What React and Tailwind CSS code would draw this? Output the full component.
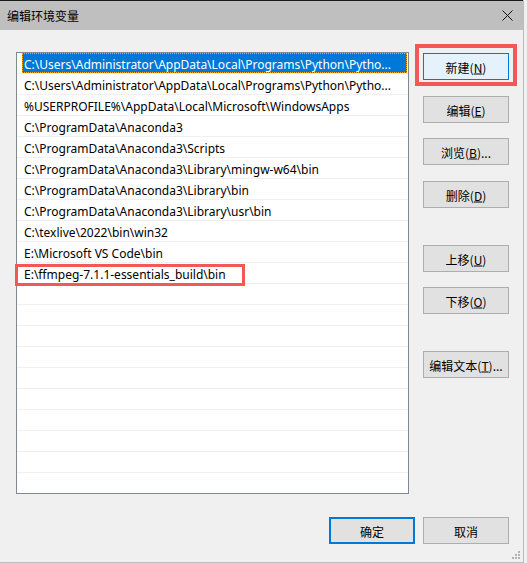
import React from 'react'

const paths = [
  'C:\\Users\\Administrator\\AppData\\Local\\Programs\\Python\\Pytho...',
  'C:\\Users\\Administrator\\AppData\\Local\\Programs\\Python\\Pytho...',
  '%USERPROFILE%\\AppData\\Local\\Microsoft\\WindowsApps',
  'C:\\ProgramData\\Anaconda3',
  'C:\\ProgramData\\Anaconda3\\Scripts',
  'C:\\ProgramData\\Anaconda3\\Library\\mingw-w64\\bin',
  'C:\\ProgramData\\Anaconda3\\Library\\bin',
  'C:\\ProgramData\\Anaconda3\\Library\\usr\\bin',
  'C:\\texlive\\2022\\bin\\win32',
  'E:\\Microsoft VS Code\\bin',
  'E:\\ffmpeg-7.1.1-essentials_build\\bin',
]

const cjk = { fontFamily: '"Noto Sans CJK SC", "Noto Sans", sans-serif' }

function Btn({ label, hot, tail = '', className = '', variant = 'plain' }) {
  const look =
    variant === 'hover'
      ? 'bg-[#e5f1fb] border border-[#0078d7]'
      : variant === 'default'
      ? 'bg-[#e1e1e1] border-2 border-[#0078d7]'
      : 'bg-[#e1e1e1] border border-[#adadad]'
  return (
    <div className={`w-[86px] h-[27px] flex items-center justify-center text-[12px] text-black ${look} ${className}`} style={cjk}>
      <span className="translate-y-[0.5px]">
        {label}
        {hot && (<>(<u>{hot}</u>)</>)}
        {tail}
      </span>
    </div>
  )
}

function Grip() {
  const dots = [[6, 0], [3, 3], [6, 3], [0, 6], [3, 6], [6, 6]]
  return (
    <div className="absolute right-[3px] bottom-[3px] w-[8px] h-[8px]">
      {dots.map(([x, y], i) => (
        <div key={i} className="absolute w-[2px] h-[2px] bg-[#b4b4b4]" style={{ left: x, top: y }} />
      ))}
    </div>
  )
}

export default function App() {
  const rows = Array.from({ length: 21 }, (_, i) => paths[i] || '')

  return (
    <div className="w-[527px] h-[563px] bg-[#f0f0f0] overflow-hidden">
      <div className="relative w-[524px] h-[563px] bg-[#f0f0f0] border-r border-b border-[#bcbcbc] flex flex-col">
        {/* title bar */}
        <div className="h-[30px] shrink-0 bg-[#bfbfbf] border-t border-[#1a1a1a] flex items-center pl-[7px] pr-[10px]">
          <span className="text-[12px] text-black" style={cjk}>编辑环境变量</span>
          <svg className="ml-auto mt-[-1px]" width="11" height="11" viewBox="0 0 11 11">
            <path d="M0.5 0.5 L10.5 10.5 M10.5 0.5 L0.5 10.5" stroke="#111" strokeWidth="1" />
          </svg>
        </div>

        {/* body */}
        <div className="flex pl-[16px] pt-[22px]">
          <div className="w-[393px] h-[442px] bg-white border border-[#828790] overflow-hidden">
            {rows.map((p, i) => (
              <div key={i} className="h-[21px] border-b border-[#f0f0f0] pl-[5px] pr-[1px]">
                <div
                  className={`h-[20px] flex items-center pt-[3px] pl-[2px] whitespace-nowrap text-[12px] ${i === 0 ? 'bg-[#0078d7] text-white outline-1 outline-dotted outline-[#f5a623] -outline-offset-1' : 'text-black'}`}
                  style={{ fontFamily: '"Noto Sans", "Open Sans", sans-serif' }}
                >
                  {p}
                </div>
              </div>
            ))}
          </div>

          <div className="ml-[14px] pt-[1px] flex flex-col">
            <Btn label="新建" hot="N" variant="hover" />
            <Btn label="编辑" hot="E" className="mt-[16px]" />
            <Btn label="浏览" hot="B" tail="..." className="mt-[15px]" />
            <Btn label="删除" hot="D" className="mt-[16px]" />
            <Btn label="上移" hot="U" className="mt-[37px]" />
            <Btn label="下移" hot="O" className="mt-[15px]" />
            <Btn label="编辑文本" hot="T" tail="..." className="mt-[37px]" />
          </div>
        </div>

        {/* footer */}
        <div className="flex justify-end gap-[8px] pr-[14px] mt-[23px]">
          <Btn label="确定" variant="default" />
          <Btn label="取消" />
        </div>

        <Grip />

        {/* annotation boxes */}
        <div className="absolute left-[15px] top-[264px] w-[230px] h-[22px] border-[3px] border-[#f25858]" />
        <div className="absolute left-[415px] top-[44px] w-[102px] h-[42px] border-[4px] border-[#f25858]" />
      </div>
    </div>
  )
}
